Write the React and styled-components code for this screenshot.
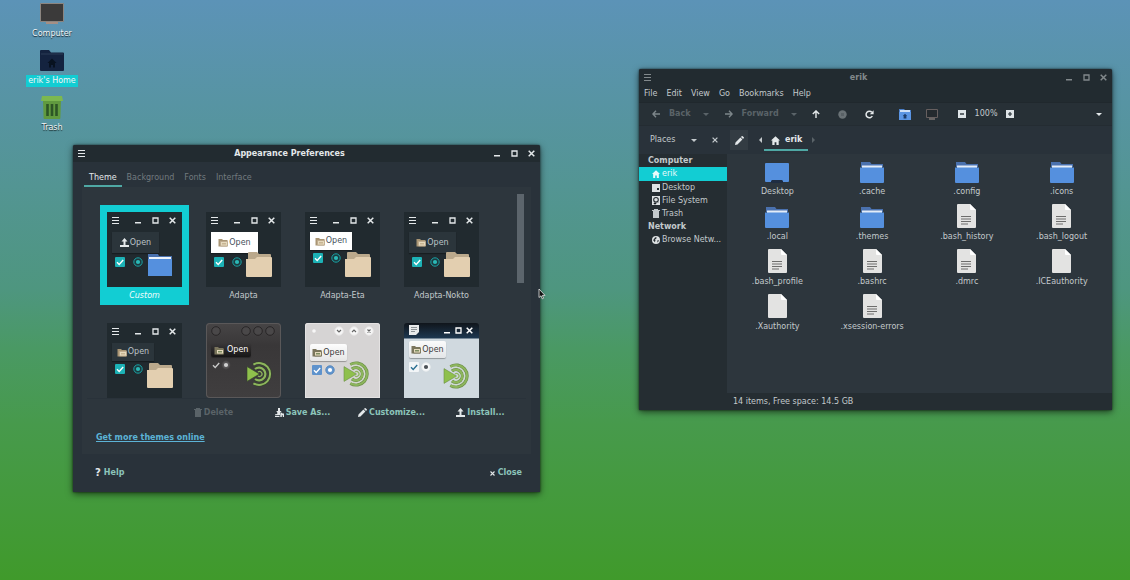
import React, { useState } from "react";
import styled, { createGlobalStyle, css } from "styled-components";

const c = {
  bar: "#222b30",
  body: "#29323a",
  panel: "#2d363d",
  side: "#252d32",
  accent: "#12cdd3",
  teal: "#8cc4ba",
  line: "#4fa8a4",
  text: "#c3c9cc",
  bright: "#e4e8ea",
  muted: "#727a7f",
  dim: "#5a6368",
  thumb: "#212a2f",
};

const Global = createGlobalStyle`
  *, *::before, *::after { box-sizing: border-box; }
  body { margin: 0; }
  body, button { font-family: "DejaVu Sans", sans-serif; font-size: 8px; line-height: 10px; }
  button { border: 0; padding: 0; margin: 0; background: none; color: inherit; cursor: default; }
  svg { display: block; flex: none; }
`;

const Desktop = styled.main`
  position: relative;
  min-height: 100vh;
  overflow: hidden;
  padding: 2px 26px;
  color: ${c.text};
  background: linear-gradient(180deg, #5c93b7 0%, #4e967f 50%, #4a9964 60%, #479a4c 73%, #409a2b 100%);
`;

/* ---------- desktop shortcuts ---------- */

const Shortcuts = styled.nav`
  display: flex;
  flex-direction: column;
  gap: 9px;
  width: 52px;
`;

const Shortcut = styled.button`
  display: flex;
  flex-direction: column;
  align-items: center;
  gap: 3px;
  height: 38px;
  color: #f2f5f6;
  white-space: nowrap;
`;

const ShortcutLabel = styled.span`
  padding: 1px 2px;
  text-shadow: ${(p) => (p.$on ? "none" : "0 1px 1px rgba(0, 0, 0, 0.8)")};
  background: ${(p) => (p.$on ? c.accent : "transparent")};
`;

/* ---------- window frame ---------- */

const Window = styled.section`
  position: absolute;
  display: flex;
  flex-direction: column;
  background: ${c.body};
  border-radius: 2px 2px 0 0;
  box-shadow: 0 2px 7px rgba(0, 0, 0, 0.6), 0 0 2px rgba(0, 0, 0, 0.7);
`;

const PrefsWindow = styled(Window)`
  left: 73px;
  top: 145px;
  width: 467px;
  min-height: 347px;
`;

const FilesWindow = styled(Window)`
  right: 18px;
  top: 69px;
  width: 473px;
  min-height: 341px;
`;

const TitleBar = styled.header`
  display: flex;
  align-items: center;
  height: 17px;
  padding: 0 5px;
  background: ${c.bar};
  border-radius: 2px 2px 0 0;
  color: ${(p) => (p.$inactive ? "#82898c" : c.bright)};
`;

const Title = styled.h1`
  flex: 1;
  margin: 0;
  font-size: 8px;
  line-height: 10px;
  text-align: center;
`;

const WindowButtons = styled.div`
  display: flex;
  gap: 10px;
`;

/* ---------- preferences ---------- */

const Tabs = styled.div`
  display: flex;
  height: 25px;
  padding: 8px 11px 0;
`;

const Tab = styled.button`
  padding: 0 5px;
  color: ${(p) => (p.$on ? c.bright : c.muted)};
  border-bottom: 2px solid ${(p) => (p.$on ? c.line : "transparent")};
`;

const Notebook = styled.div`
  flex: 1;
  display: flex;
  flex-direction: column;
  margin: 0 9px;
  padding: 5px 5px 0;
  background: ${c.panel};
`;

const ThemeScroller = styled.div`
  display: flex;
  justify-content: space-between;
  height: 207px;
  padding: 2px 2px 0 13px;
  overflow: hidden;
  border-bottom: 1px solid #29323a;
`;

const ThemeGrid = styled.div`
  display: grid;
  grid-template-columns: repeat(4, 89px);
  grid-auto-rows: 100px;
  gap: 11px 10px;
  padding-top: 11px;
`;

const ScrollThumb = styled.div`
  width: 7px;
  height: 89px;
  background: #5c656c;
`;

const ThemeItem = styled.button`
  display: flex;
  flex-direction: column;
  align-items: center;
  gap: 4px;
  padding-top: 7px;
  background: ${(p) => (p.$on ? c.accent : "transparent")};
  color: ${(p) => (p.$on ? "#f0fdfd" : c.text)};
  font-style: ${(p) => (p.$on ? "italic" : "normal")};
`;

const skins = {
  adapta: css`
    background: ${c.thumb};
    color: ${c.bright};
  `,
  dark: css`
    background: linear-gradient(#474546, #393738 30%, #403e3f);
    border-radius: 4px;
    box-shadow: inset 0 0 0 1px #5a5859;
    color: #fff;
  `,
  light: css`
    background: #d6d4d4;
    border-radius: 3px 3px 0 0;
    box-shadow: inset 0 0 0 1px #e4e2e2;
    color: #444;
  `,
  menta: css`
    background: linear-gradient(#10151b, #1d3750 15px, #d0d9df 16px);
    border-radius: 3px 3px 0 0;
    color: #fff;
  `,
};

const Preview = styled.span`
  position: relative;
  display: flex;
  flex-direction: column;
  align-items: flex-start;
  width: 75px;
  height: 75px;
  padding: 0 5px;
  font-style: normal;
  ${(p) => skins[p.$skin]}
`;

const PreviewBar = styled.span`
  display: flex;
  align-items: center;
  justify-content: space-between;
  width: 100%;
  height: ${(p) => p.$height}px;
  padding-bottom: ${(p) => p.$lift}px;
`;

const PreviewControls = styled.span`
  display: flex;
  gap: ${(p) => p.$gap}px;
  padding-right: 1px;
`;

const Push = styled.span`
  flex: 1;
`;

const PreviewButton = styled.span`
  display: flex;
  align-items: center;
  justify-content: center;
  gap: 1px;
  width: ${(p) => p.$w}px;
  height: ${(p) => p.$h}px;
  background: ${(p) => p.$bg};
  color: ${(p) => p.$fg};
  border-radius: ${(p) => p.$radius || 0}px;
  box-shadow: 0 1px 1px rgba(0, 0, 0, 0.3);
`;

const PreviewChecks = styled.span`
  display: flex;
  align-items: center;
  gap: ${(p) => p.$gap}px;
  padding: ${(p) => p.$top}px 0 0 ${(p) => p.$left}px;
`;

const PreviewEmblem = styled.span`
  position: absolute;
  left: ${(p) => p.$x || 40}px;
  top: ${(p) => p.$y || 40}px;
`;

const Actions = styled.div`
  display: grid;
  grid-template-columns: repeat(4, 89px);
  justify-content: end;
  height: 27px;
  padding-right: 1px;
`;

const TextButton = styled.button`
  display: flex;
  align-items: center;
  justify-content: center;
  gap: ${(p) => p.$gap || 2}px;
  font-weight: bold;
  color: ${c.teal};
  white-space: nowrap;
  &:disabled { color: ${c.dim}; }
`;

const ThemeLink = styled.a`
  align-self: flex-start;
  margin: 7px 0 11px 9px;
  font-weight: bold;
  color: #5cb3d6;
`;

const PrefsFooter = styled.footer`
  display: flex;
  justify-content: space-between;
  align-items: center;
  height: 38px;
  padding: 0 18px 0 22px;
`;

const HelpMark = styled.span`
  font-size: 10px;
  color: ${c.bright};
`;

const BrightMark = styled.span`
  color: ${c.bright};
`;

/* ---------- file manager ---------- */

const MenuBar = styled.nav`
  display: flex;
  gap: 9px;
  height: 16px;
  padding: 2px 5px;
  background: ${c.bar};
`;

const Toolbar = styled.div`
  display: flex;
  align-items: center;
  height: 24px;
  padding: 0 10px 0 13px;
  background: #273036;
  border-top: 1px solid #20282d;
  border-bottom: 1px solid #242c32;
`;

const ToolGroup = styled.div`
  display: flex;
  align-items: center;
  gap: ${(p) => p.$gap}px;
  margin-right: ${(p) => p.$after || 0}px;
`;

const ToolButton = styled.button`
  display: flex;
  align-items: center;
  gap: 9px;
  font-weight: bold;
  color: ${c.bright};
  &:disabled { color: ${c.dim}; }
`;

const LocationBar = styled.div`
  display: flex;
  align-items: center;
  height: 28px;
  padding-right: 10px;
  color: ${c.text};
`;

const PlacesHead = styled.div`
  display: grid;
  grid-template-columns: 1fr 21px 15px;
  align-items: center;
  width: 88px;
  padding-left: 11px;
  color: ${c.text};
`;

const EditButton = styled.button`
  display: grid;
  place-items: center;
  width: 18px;
  height: 20px;
  margin: 0 11px 0 3px;
  background: #333c43;
`;

const PathButton = styled.button`
  display: flex;
  align-items: center;
  gap: 5px;
  height: 21px;
  margin: 0 4px 0 2px;
  padding: 2px 6px 0 7px;
  border-bottom: 2px solid ${c.line};
  color: ${c.bright};
  font-weight: bold;
`;

const Split = styled.div`
  flex: 1;
  display: flex;
`;

const Sidebar = styled.aside`
  width: 88px;
  background: ${c.side};
`;

const SideHeading = styled.h2`
  margin: 0;
  padding: 0 9px;
  font-size: 8px;
  line-height: 13px;
  color: ${c.text};
`;

const Place = styled.button`
  display: flex;
  align-items: center;
  gap: 2px;
  width: 100%;
  height: ${(p) => (p.$on ? 14 : 13)}px;
  padding-left: 13px;
  white-space: nowrap;
  background: ${(p) => (p.$on ? c.accent : "transparent")};
  color: ${(p) => (p.$on ? "#e8fbfb" : c.text)};
`;

const Main = styled.div`
  flex: 1;
  display: flex;
  flex-direction: column;
  background: ${c.panel};
`;

const FileGrid = styled.div`
  flex: 1;
  display: grid;
  grid-template-columns: repeat(4, 1fr);
  grid-auto-rows: 37px;
  row-gap: 8px;
  align-content: start;
  padding: 6px 3px 0;
`;

const FileItem = styled.button`
  display: flex;
  flex-direction: column;
  justify-content: flex-end;
  align-items: center;
  gap: 4px;
`;

const StatusBar = styled.footer`
  height: 17px;
  padding: 4px 6px 0;
  background: ${c.side};
`;

const Pointer = styled.svg`
  position: absolute;
  left: 538px;
  top: 288px;
`;

/* ---------- icons ---------- */

const MenuIcon = () => (
  <svg width="7" height="7" fill="currentColor" shapeRendering="crispEdges">
    <path d="M0 0h7v1H0zM0 3h7v1H0zM0 6h7v1H0z" />
  </svg>
);
const MinIcon = () => (
  <svg width="7" height="7" fill="currentColor"><path d="M0 5h6v1.5H0z" /></svg>
);
const MaxIcon = () => (
  <svg width="7" height="7" fill="none" stroke="currentColor" strokeWidth="1.3"><path d="M1 1h5v5H1z" /></svg>
);
const CloseIcon = ({ size = 7 }) => (
  <svg width={size} height={size} viewBox="0 0 7 7" stroke="currentColor" strokeWidth="1.5"><path d="M.7.7l5.6 5.6M6.3.7L.7 6.3" /></svg>
);
const CaretDown = () => (
  <svg width="6" height="3" fill="currentColor"><path d="M0 0h6L3 3z" /></svg>
);
const CaretLeft = () => (
  <svg width="3" height="6" fill="currentColor"><path d="M3 0v6L0 3z" /></svg>
);
const CaretRight = () => (
  <svg width="3" height="6" fill="currentColor"><path d="M0 0v6l3-3z" /></svg>
);
const Arrow = ({ turn, soft }) => (
  <svg width="8" height="8" viewBox="0 0 8 8" fill="none" stroke={soft ? "#7d868a" : "currentColor"} strokeWidth="1.4">
    <path transform={`rotate(${turn} 4 4)`} d="M8 4H1M4 .8L.9 4 4 7.2" />
  </svg>
);
const StopIcon = () => (
  <svg width="9" height="9"><circle cx="4.5" cy="4.5" r="4.2" fill="#6a7276" /><path d="M3 3h3v3H3z" fill="#596166" /></svg>
);
const ReloadIcon = () => (
  <svg width="9" height="9" viewBox="0 0 9 9"><path d="M7.3 6A3.3 3.3 0 1 1 6.9 2.3" fill="none" stroke="currentColor" strokeWidth="1.5" /><path d="M8.6.3v3.9H4.8z" fill="currentColor" /></svg>
);
const HomeIcon = ({ size = 9 }) => (
  <svg width={size} height={size} viewBox="0 0 9 9" fill="currentColor"><path d="M4.5.2L0 4.600h1.300V9h2.300V6.200h1.800V9h2.300V4.600H9z" /></svg>
);
const ZoomIcon = ({ plus }) => (
  <svg width="8" height="8"><path d="M0 0h8v8H0z" fill="#dfe5e8" /><path d={plus ? "M2 3.400h1.400V2h1.200v1.400H6v1.200H4.600V6H3.400V4.600H2z" : "M2 3.300h4v1.400H2z"} fill="#273036" /></svg>
);
const HomeFolderIcon = () => (
  <svg width="12" height="11"><path d="M0 0h5l1 1h6v9H0z" fill="#4a7fc8" /><path d="M1 1h10v2H1z" fill="#cfe0f6" /><path d="M0 3h12v8H0z" fill="#5b95e3" /><path d="M6 4.800L3.800 7h.8v2.600h2.800V7h.8z" fill="#1d3d6b" /></svg>
);
const MonitorIcon = () => (
  <svg width="12" height="11"><path d="M.5.5h11v8H.5z" fill="#242a2e" stroke="#665f5f" /><path d="M3 9.500h6v1H3z" fill="#a89a93" /></svg>
);
const PencilIcon = ({ size = 9 }) => (
  <svg width={size} height={size} viewBox="0 0 9 9" fill="#e4e8ea"><path d="M0 9l.5-2.500 4.900-4.900 2 2L2.500 8.500zM6 1L6.900.1q.4-.2.8.1l1.100 1.100q.3.4.1.8L8 3z" /></svg>
);
const TrashIcon = () => (
  <svg width="8" height="9" fill="currentColor"><path d="M2 0h4v1h2v1H7v7H1V2H0V1h2z" /></svg>
);
const UploadIcon = () => (
  <svg width="9" height="9" viewBox="0 0 9 9" fill="#e4e8ea"><path d="M4.500 0L1.500 3.500h2V7H0v2h9V7H5.500V3.500h2z" /></svg>
);
const SaveAsIcon = () => (
  <svg width="9" height="9" viewBox="0 0 9 9" fill="#e4e8ea"><path d="M3 0h2v3h1.500L5 5.200V7H0l.2-.8L2 6l.5-1L1.300 3H3zM0 7.700h4.500V9H0zM5.300 5.500L6.500 4.500 7.500 5.500H9V9H7.800V7.200H6.800V9H5.300z" /></svg>
);
const DriveIcon = () => (
  <svg width="8" height="9"><path d="M0 0h8v9H0z" fill="#dde1e3" /><circle cx="4" cy="3.800" r="2.300" fill="none" stroke="#252d32" strokeWidth="1.100" /><path d="M2 7h2v1H2zM5.300 5.500l1 1" stroke="#252d32" strokeWidth=".6" /></svg>
);
const DesktopSmallIcon = () => (
  <svg width="8" height="8"><path d="M0 0h8v8H0z" fill="#dde1e3" /><path d="M5 4h2v2H5z" fill="#252d32" /></svg>
);
const GlobeIcon = () => (
  <svg width="8" height="8" viewBox="0 0 8 8"><circle cx="4" cy="4" r="4" fill="#dde1e3" /><path d="M3.200 1.200L4.800 1.600 4.200 2.800 3 3.400 3.500 4.500 2.800 6.200 1.900 5 1.100 4.200zM5.500 4.300L6.800 4l-.5 1.800-1 .8z" fill="#252d32" /></svg>
);

const FolderIcon = () => (
  <svg width="24" height="21"><path d="M1 0h9l1.500 2H23v3H1z" fill="#4a71ae" /><path d="M2 3.500h20V6H2z" fill="#e3ecf8" /><path d="M0 5.500h24V20q0 1-1 1H1q-1 0-1-1z" fill="#5590de" /></svg>
);
const DesktopFolderIcon = () => (
  <svg width="24" height="20"><path d="M0 1q0-1 1-1h22q1 0 1 1v17q0 1-1 1H1q-1 0-1-1z" fill="#5590de" /><path d="M7 17h10l1 1v2H6v-2z" fill="#1f2d42" /></svg>
);
const DocumentIcon = ({ lines }) => (
  <svg width="19" height="24"><path d="M1 0h12l6 6v17q0 1-1 1H1q-1 0-1-1V1q0-1 1-1z" fill="#e3e3e2" /><path d="M13 0v5q0 1 1 1h5z" fill="#fff" />{lines && <path d="M4 12.500h10M4 15h10M4 17.500h10M4 20h7" stroke="#6d6d6c" strokeWidth="1" />}</svg>
);

const ComputerBig = () => (
  <svg width="24" height="23"><path d="M.5 1.500h23v18H.5z" fill="#3b3a3a" stroke="#8b8580" /><path d="M6 20h12v2H6z" fill="#a58f85" /></svg>
);
const HomeBig = () => (
  <svg width="24" height="23"><path d="M0 2q0-1 1-1h8l2 2.500h12q1 0 1 1V21q0 1-1 1H1q-1 0-1-1z" fill="#14233f" /><path d="M1 5h22" stroke="#2b3c56" /><path d="M12 9.500L7.500 14H9v4.500h2V16h2v2.500h2V14h1.500z" fill="#081220" /></svg>
);
const TrashBig = () => (
  <svg width="22" height="23"><path d="M2 4h18l-.6 18q0 1-1 1H3.600q-1 0-1-1z" fill="#609a3f" /><path d="M1 0h20l1 5H0z" fill="#7cb850" /><path d="M6.500 8v12M11 8v12M15.500 8v12" stroke="#2c5526" strokeWidth="2.600" /></svg>
);

const PreviewFolder = ({ blue }) => blue ? (
  <svg width="26" height="25"><path d="M1 2h10l1 2h13v3H1z" fill="#4a71ae" /><path d="M2 5h22v2.500H2z" fill="#edf3fb" /><path d="M1 7h24v17H1z" fill="#5590de" /></svg>
) : (
  <svg width="26" height="25"><path d="M2 1q0-1 1-1h8l2 2h11q1 0 1 1v7H2z" fill="#bba98c" /><path d="M0 7h9l2-2h14q1 0 1 1v18q0 1-1 1H1q-1 0-1-1z" fill="#e3cfb0" /></svg>
);
const MiniFolder = ({ dark }) => (
  <svg width="10" height="9"><path d="M.5 1h3.500l1 1h4.500v6.500h-9z" fill={dark ? "#7b755d" : "#a99574"} /><path d="M2.500 3.500h7V8h-7z" fill="#e5d9bd" stroke={dark ? "#6c6b4e" : "#bda88a"} strokeWidth=".8" /><path d="M4 5h4v1.500H4z" fill={dark ? "#7d8c60" : "#c8b593"} /></svg>
);
const CheckMark = ({ box, tick = "#fff" }) => (
  <svg width="10" height="10"><rect width="10" height="10" rx="1" fill={box} /><path d="M2 5.200l2.200 2.200L8.200 3" fill="none" stroke={tick} strokeWidth="1.400" /></svg>
);
const RadioMark = ({ ring, fill, dot }) => (
  <svg width="10" height="10"><circle cx="5" cy="5" r="4.200" fill={fill} stroke={ring} /><circle cx="5" cy="5" r="2.100" fill={dot} /></svg>
);
const TargetLogo = ({ gap, edge }) => (
  <svg width="26" height="26" viewBox="0 0 26 26" fill="none">
    <path d="M7.400 3.600A11 11 0 1 1 7.400 22.400" stroke={edge} strokeWidth="3.200" />
    <path d="M9 8A6.400 6.400 0 1 1 9 18" stroke={edge} strokeWidth="3.400" />
    <path d="M7.400 5.500A9 9 0 1 1 7.400 20.500" stroke={gap} strokeWidth="1" />
    <path d="M7.400 3.600A11 11 0 1 1 7.400 22.400" stroke="#8db55c" strokeWidth="2" />
    <path d="M9 8A6.400 6.400 0 1 1 9 18" stroke="#8db55c" strokeWidth="2.200" />
    <path d="M12 11A2.500 2.500 0 1 1 12 15" stroke="#8db55c" strokeWidth="1.200" />
    <path d="M1 5.600L13.500 13 1 20.400z" fill="#8fc04c" stroke={edge} strokeWidth=".6" />
  </svg>
);
const Knob = ({ fill, ring, glyph }) => (
  <svg width="10" height="10"><circle cx="5" cy="5" r="4.300" fill={fill} stroke={ring} />{glyph && <path d={glyph} fill="none" stroke="#666" strokeWidth="1.100" />}</svg>
);
const DotIcon = () => (
  <svg width="8" height="8"><circle cx="4" cy="4" r="1.800" fill="#f7f7f7" /></svg>
);
const DocSmall = () => (
  <svg width="10" height="10"><path d="M0 0h10v7L7 10H0z" fill="#e8eaea" /><path d="M2 2.500h6M2 4.500h6M2 6.500h4" stroke="#8c9295" /></svg>
);

/* ---------- theme previews ---------- */

function AdaptaPreview({ fill, fg, compact, blue }) {
  return (
    <Preview $skin="adapta">
      <PreviewBar $height={20} $lift={4}>
        <MenuIcon />
        <PreviewControls $gap={10}><MinIcon /><MaxIcon /><CloseIcon /></PreviewControls>
      </PreviewBar>
      <PreviewButton $w={compact ? 42 : 47} $h={compact ? 18 : 21} $bg={fill} $fg={fg}>
        {blue ? <UploadIcon /> : <MiniFolder />}Open
      </PreviewButton>
      <PreviewChecks $gap={8} $top={compact ? 3 : 4} $left={3}>
        <CheckMark box="#1cb2b6" />
        <RadioMark ring="#1aa3a5" fill="#1c3a3f" dot="#2bb9b7" />
      </PreviewChecks>
      <PreviewEmblem><PreviewFolder blue={blue} /></PreviewEmblem>
    </Preview>
  );
}

function DarkPreview() {
  const knob = <Knob fill="#4a4849" ring="#282627" />;
  return (
    <Preview $skin="dark">
      <PreviewBar $height={20} $lift={4}>
        {knob}
        <PreviewControls $gap={2}>{knob}{knob}{knob}</PreviewControls>
      </PreviewBar>
      <PreviewButton $w={40} $h={14} $bg="linear-gradient(#3a3839, #171616)" $fg="#fff" $radius={2}><MiniFolder dark />&nbsp;Open</PreviewButton>
      <PreviewChecks $gap={0} $top={3} $left={0}>
        <CheckMark box="transparent" tick="#c8c8c8" />
        <RadioMark ring="#403e3f" fill="#565455" dot="#d0d0d0" />
      </PreviewChecks>
      <PreviewEmblem $y={38}><TargetLogo gap="#3d3f38" edge="#34402c" /></PreviewEmblem>
    </Preview>
  );
}

function LightPreview() {
  return (
    <Preview $skin="light">
      <PreviewBar $height={21} $lift={5}>
        <DotIcon />
        <PreviewControls $gap={5}>
          <Knob fill="#f6f6f6" ring="#e6e4e4" glyph="M3 4l2 2 2-2" />
          <Knob fill="#f6f6f6" ring="#e6e4e4" glyph="M3 6l2-2 2 2" />
          <Knob fill="#f6f6f6" ring="#e6e4e4" glyph="M3.500 3.500l3 3M6.500 3.500l-3 3" />
        </PreviewControls>
      </PreviewBar>
      <PreviewButton $w={37} $h={17} $bg="linear-gradient(#fdfdfd, #e6e6e6)" $fg="#3c3c3c" $radius={2}><MiniFolder dark />Open</PreviewButton>
      <PreviewChecks $gap={3} $top={4} $left={2}>
        <CheckMark box="#5e92cc" />
        <RadioMark ring="#5586bd" fill="#6296cf" dot="#fff" />
      </PreviewChecks>
      <PreviewEmblem $x={38} $y={38}><TargetLogo gap="#d6dccc" edge="#6c8f48" /></PreviewEmblem>
    </Preview>
  );
}

function MentaPreview() {
  return (
    <Preview $skin="menta">
      <PreviewBar $height={18} $lift={4}>
        <DocSmall />
        <PreviewControls $gap={4}><MinIcon /><MaxIcon /><CloseIcon /></PreviewControls>
      </PreviewBar>
      <PreviewButton $w={37} $h={17} $bg="linear-gradient(#fbfbfb, #e3e6e8)" $fg="#3c3c3c" $radius={2}><MiniFolder dark />Open</PreviewButton>
      <PreviewChecks $gap={2} $top={4} $left={0}>
        <CheckMark box="#f2f5f7" tick="#2a6f92" />
        <RadioMark ring="#e8eced" fill="#f7f9fa" dot="#4c5257" />
      </PreviewChecks>
      <PreviewEmblem $x={39}><TargetLogo gap="#d0dad0" edge="#6c8f48" /></PreviewEmblem>
    </Preview>
  );
}

const themes = [
  { name: "Custom", art: <AdaptaPreview blue fill="#2b353b" fg="#bcc3c7" /> },
  { name: "Adapta", art: <AdaptaPreview fill="#ffffff" fg="#46505a" /> },
  { name: "Adapta-Eta", art: <AdaptaPreview compact fill="#ffffff" fg="#46505a" /> },
  { name: "Adapta-Nokto", art: <AdaptaPreview fill="#2b353b" fg="#bcc3c7" /> },
  { name: "Adapta-Nokto-Eta", art: <AdaptaPreview compact fill="#2b353b" fg="#bcc3c7" /> },
  { name: "BlackMATE", art: <DarkPreview /> },
  { name: "BlueMenta", art: <LightPreview /> },
  { name: "Blue-Submarine", art: <MentaPreview /> },
];

const files = [
  ["Desktop", "desktop"], [".cache", "folder"], [".config", "folder"], [".icons", "folder"],
  [".local", "folder"], [".themes", "folder"], [".bash_history", "text"], [".bash_logout", "text"],
  [".bash_profile", "text"], [".bashrc", "text"], [".dmrc", "text"], [".ICEauthority", "blank"],
  [".Xauthority", "blank"], [".xsession-errors", "text"],
];

const fileIcons = {
  desktop: <DesktopFolderIcon />,
  folder: <FolderIcon />,
  text: <DocumentIcon lines />,
  blank: <DocumentIcon />,
};

function Frame({ title, inactive }) {
  return (
    <TitleBar $inactive={inactive}>
      <button aria-label="Window menu"><MenuIcon /></button>
      <Title>{title}</Title>
      <WindowButtons>
        <button aria-label="Minimize"><MinIcon /></button>
        <button aria-label="Maximize"><MaxIcon /></button>
        <button aria-label="Close window"><CloseIcon /></button>
      </WindowButtons>
    </TitleBar>
  );
}

function Preferences() {
  const [tab, setTab] = useState("Theme");
  const [picked, setPicked] = useState("Custom");
  return (
    <PrefsWindow>
      <Frame title="Appearance Preferences" />
      <Tabs role="tablist">
        {["Theme", "Background", "Fonts", "Interface"].map((t) => (
          <Tab key={t} role="tab" aria-selected={tab === t} $on={tab === t} onClick={() => setTab(t)}>{t}</Tab>
        ))}
      </Tabs>
      <Notebook>
        <ThemeScroller>
          <ThemeGrid>
            {themes.map((t, i) => (
              <ThemeItem key={t.name} $on={picked === t.name} aria-label={t.name} onClick={() => setPicked(t.name)}>
                {t.art}
                {i < 4 && <span>{t.name}</span>}
              </ThemeItem>
            ))}
          </ThemeGrid>
          <ScrollThumb />
        </ThemeScroller>
        <Actions>
          <TextButton disabled><TrashIcon />Delete</TextButton>
          <TextButton><SaveAsIcon />Save As...</TextButton>
          <TextButton><PencilIcon />Customize...</TextButton>
          <TextButton><UploadIcon />Install...</TextButton>
        </Actions>
        <ThemeLink href="#themes">Get more themes online</ThemeLink>
      </Notebook>
      <PrefsFooter>
        <TextButton $gap={3}><HelpMark>?</HelpMark>Help</TextButton>
        <TextButton $gap={3}><BrightMark><CloseIcon size={5} /></BrightMark>Close</TextButton>
      </PrefsFooter>
    </PrefsWindow>
  );
}

function FileManager() {
  return (
    <FilesWindow>
      <Frame title="erik" inactive />
      <MenuBar>
        {["File", "Edit", "View", "Go", "Bookmarks", "Help"].map((m) => <button key={m}>{m}</button>)}
      </MenuBar>
      <Toolbar>
        <ToolGroup $gap={12} $after={16}>
          <ToolButton disabled><Arrow turn={0} soft />Back</ToolButton>
          <ToolButton disabled aria-label="Back history"><CaretDown /></ToolButton>
        </ToolGroup>
        <ToolGroup $gap={12} $after={15}>
          <ToolButton disabled><Arrow turn={180} soft />Forward</ToolButton>
          <ToolButton disabled aria-label="Forward history"><CaretDown /></ToolButton>
        </ToolGroup>
        <ToolGroup $gap={18} $after={25}>
          <ToolButton aria-label="Up"><Arrow turn={90} /></ToolButton>
          <ToolButton disabled aria-label="Stop"><StopIcon /></ToolButton>
          <ToolButton aria-label="Reload"><ReloadIcon /></ToolButton>
        </ToolGroup>
        <ToolGroup $gap={15} $after={20}>
          <ToolButton aria-label="Home"><HomeFolderIcon /></ToolButton>
          <ToolButton aria-label="Computer"><MonitorIcon /></ToolButton>
        </ToolGroup>
        <ToolGroup $gap={9}>
          <ToolButton aria-label="Zoom out"><ZoomIcon /></ToolButton>
          <span>100%</span>
          <ToolButton aria-label="Zoom in"><ZoomIcon plus /></ToolButton>
        </ToolGroup>
        <Push />
        <ToolButton aria-label="View options"><CaretDown /></ToolButton>
      </Toolbar>
      <LocationBar>
        <PlacesHead>
          <span>Places</span>
          <button aria-label="Choose side pane"><CaretDown /></button>
          <button aria-label="Close side pane"><CloseIcon size={6} /></button>
        </PlacesHead>
        <EditButton aria-label="Edit location"><PencilIcon /></EditButton>
        <button aria-label="Scroll path left"><CaretLeft /></button>
        <PathButton><HomeIcon />erik</PathButton>
        <ToolButton disabled aria-label="Scroll path right"><CaretRight /></ToolButton>
      </LocationBar>
      <Split>
        <Sidebar>
          <SideHeading>Computer</SideHeading>
          <Place $on><HomeIcon size={8} />erik</Place>
          <Place><DesktopSmallIcon />Desktop</Place>
          <Place><DriveIcon />File System</Place>
          <Place><TrashIcon />Trash</Place>
          <SideHeading>Network</SideHeading>
          <Place><GlobeIcon />Browse Netw...</Place>
        </Sidebar>
        <Main>
          <FileGrid>
            {files.map(([name, kind]) => (
              <FileItem key={name}>{fileIcons[kind]}<span>{name}</span></FileItem>
            ))}
          </FileGrid>
          <StatusBar>14 items, Free space: 14.5 GB</StatusBar>
        </Main>
      </Split>
    </FilesWindow>
  );
}

export default function App() {
  return (
    <>
      <Global />
      <Desktop>
        <Shortcuts>
          <Shortcut><ComputerBig /><ShortcutLabel>Computer</ShortcutLabel></Shortcut>
          <Shortcut><HomeBig /><ShortcutLabel $on>erik's Home</ShortcutLabel></Shortcut>
          <Shortcut><TrashBig /><ShortcutLabel>Trash</ShortcutLabel></Shortcut>
        </Shortcuts>
        <FileManager />
        <Preferences />
        <Pointer width="8" height="12" viewBox="0 0 8 12">
          <path d="M1 1v8.500l2-1.700 1.300 3 1.300-.6-1.300-2.800H7z" fill="#111" stroke="#e8e8e8" strokeWidth=".8" />
        </Pointer>
      </Desktop>
    </>
  );
}
